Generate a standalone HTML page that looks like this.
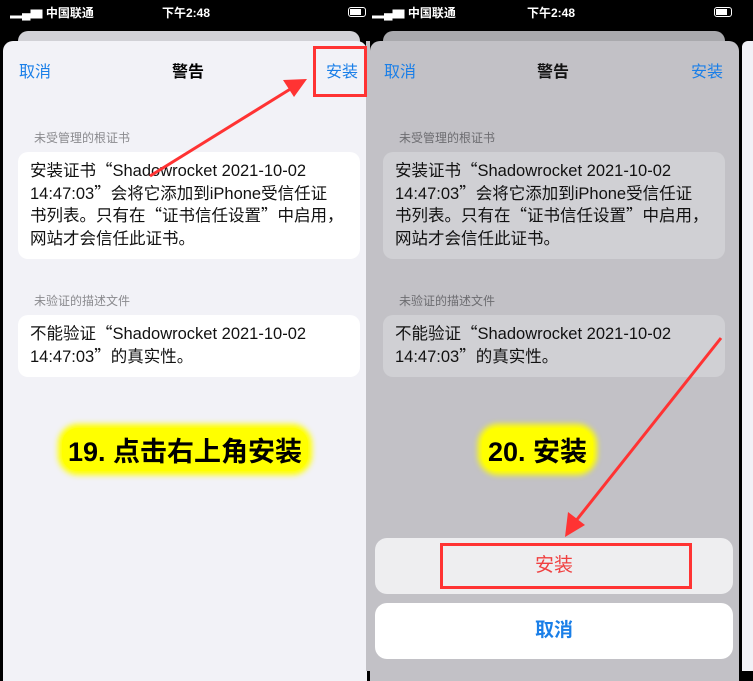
<!DOCTYPE html><html><head><meta charset="utf-8"><style>
*{margin:0;padding:0;box-sizing:border-box}
body{width:753px;height:667px;background:#000;position:relative;overflow:hidden;font-family:"Liberation Sans","Noto Sans CJK SC",sans-serif}
.a{position:absolute}
.st{color:#fff;font-size:12px;top:4px;font-weight:bold}
.nav{font-size:16px;top:58px}
.blue{color:#1a7fe8}
.hdr{font-size:12px;color:#8a8a8e}
.card{border-radius:10px;font-size:16.5px;line-height:22.5px;padding:8px 12px;color:#111;white-space:nowrap}
.q{font-family:"Noto Sans CJK SC",sans-serif;line-height:0;vertical-align:baseline}
.lab{font-size:26px;font-weight:bold;color:#000;background:#ffff00;border-radius:16px;padding:2px 6px;box-shadow:0 0 6px 4px #ffff00}
</style></head><body>
<div class="a st" style="left:10px">▂▄▆ 中国联通</div>
<div class="a st" style="left:162px">下午2:48</div>
<div class="a" style="left:348px;top:7px;width:18px;height:10px;border:1px solid #fff;border-radius:3px"><div style="margin:1px;width:11px;height:6px;background:#fff"></div></div>
<div class="a st" style="left:372px">▂▄▆ 中国联通</div>
<div class="a st" style="left:527px">下午2:48</div>
<div class="a" style="left:714px;top:7px;width:18px;height:10px;border:1px solid #fff;border-radius:3px"><div style="margin:1px;width:11px;height:6px;background:#fff"></div></div>

<div class="a" style="left:18px;top:31px;width:342px;height:30px;background:#d1d1d6;border-radius:10px"></div>
<div class="a" style="left:3px;top:41px;width:364px;height:640px;background:#f2f2f7;border-radius:10px 10px 0 0"></div>
<div class="a" style="left:366px;top:41px;width:4px;height:630px;background:#c2c1c6"></div>
<div class="a nav blue" style="left:19px">取消</div>
<div class="a nav" style="left:172px;font-weight:bold">警告</div>
<div class="a nav blue" style="left:326px">安装</div>
<div class="a" style="left:313px;top:46px;width:54px;height:51px;border:3px solid #f33"></div>
<div class="a hdr" style="left:34px;top:129px">未受管理的根证书</div>
<div class="a card" style="left:18px;top:152px;width:342px;height:107px;background:#fff">安装证书<span class="q">“</span>Shadowrocket 2021-10-02<br>14:47:03<span class="q">”</span>会将它添加到iPhone受信任证<br>书列表。只有在<span class="q">“</span>证书信任设置<span class="q">”</span>中启用，<br>网站才会信任此证书。</div>
<div class="a hdr" style="left:34px;top:292px">未验证的描述文件</div>
<div class="a card" style="left:18px;top:315px;width:342px;height:62px;background:#fff">不能验证<span class="q">“</span>Shadowrocket 2021-10-02<br>14:47:03<span class="q">”</span>的真实性。</div>
<div class="a lab" style="left:62px;top:428px;font-size:27px">19. 点击右上角安装</div>

<div class="a" style="left:383px;top:31px;width:342px;height:30px;background:#a9a9ad;border-radius:10px"></div>
<div class="a" style="left:370px;top:41px;width:369px;height:640px;background:#c2c1c6;border-radius:10px 10px 0 0"></div>
<div class="a" style="left:742px;top:41px;width:11px;height:630px;background:#f2f2f7;border-radius:6px 0 0 0"></div>
<div class="a nav blue" style="left:384px">取消</div>
<div class="a nav" style="left:537px;font-weight:bold;color:#111">警告</div>
<div class="a nav blue" style="left:691px">安装</div>
<div class="a hdr" style="left:399px;top:129px;color:#6c6c70">未受管理的根证书</div>
<div class="a card" style="left:383px;top:152px;width:342px;height:107px;background:#d0d0d4">安装证书<span class="q">“</span>Shadowrocket 2021-10-02<br>14:47:03<span class="q">”</span>会将它添加到iPhone受信任证<br>书列表。只有在<span class="q">“</span>证书信任设置<span class="q">”</span>中启用，<br>网站才会信任此证书。</div>
<div class="a hdr" style="left:399px;top:292px;color:#6c6c70">未验证的描述文件</div>
<div class="a card" style="left:383px;top:315px;width:342px;height:62px;background:#d0d0d4">不能验证<span class="q">“</span>Shadowrocket 2021-10-02<br>14:47:03<span class="q">”</span>的真实性。</div>
<div class="a lab" style="left:482px;top:428px;font-size:27px">20. 安装</div>
<div class="a" style="left:375px;top:538px;width:358px;height:56px;background:#eeeef0;border-radius:12px;text-align:center;line-height:56px;font-size:19px;color:#f04040">安装</div>
<div class="a" style="left:440px;top:543px;width:252px;height:46px;border:3px solid #f33"></div>
<div class="a" style="left:375px;top:603px;width:358px;height:56px;background:#fff;border-radius:12px;text-align:center;line-height:56px;font-size:19px;font-weight:bold;color:#1a7fe8">取消</div>

<svg class="a" style="left:0;top:0" width="753" height="667">
<line x1="150" y1="176" x2="292" y2="88" stroke="#f33" stroke-width="3"/>
<polygon points="307,79 283,80 294,97" fill="#f33"/>
<line x1="721" y1="338" x2="575" y2="522" stroke="#f33" stroke-width="3"/>
<polygon points="565,537 568,512 585,525" fill="#f33"/>
</svg>
</body></html>
